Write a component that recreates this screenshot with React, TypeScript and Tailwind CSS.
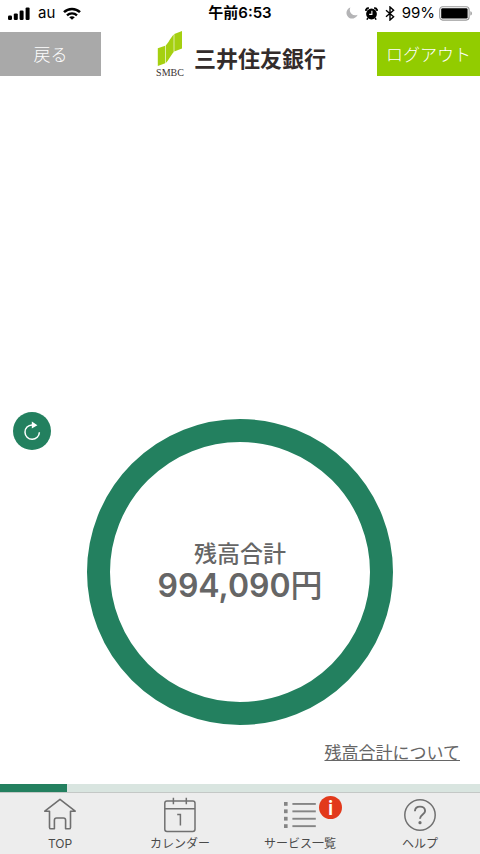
import type { ReactNode } from "react"

const LATIN_JP = "font-['Inter','Noto_Sans_CJK_JP',sans-serif]"

function SignalIcon() {
  return (
    <svg viewBox="0 0 22 13" className="h-[13px] w-[22px]" fill="#000" aria-hidden="true">
      <rect x="0" y="8.6" width="4" height="4.4" rx="1.2" />
      <rect x="5.8" y="6.4" width="4" height="6.6" rx="1.2" />
      <rect x="11.6" y="3.6" width="4" height="9.4" rx="1.2" />
      <rect x="17.6" y="0.4" width="4" height="12.6" rx="1.2" />
    </svg>
  )
}

function WifiIcon() {
  return (
    <svg viewBox="0 0 18 13" className="h-[13px] w-[18px]" aria-hidden="true">
      <path d="M1 5.2C5.4.9 12.6.9 17 5.2" fill="none" stroke="#000" strokeWidth="2.5" />
      <path d="M4 8.4C6.8 5.7 11.2 5.7 14 8.4" fill="none" stroke="#000" strokeWidth="2.3" />
      <path d="M9 12.8 6.2 10.2C7.7 8.8 10.3 8.8 11.8 10.2Z" fill="#000" />
    </svg>
  )
}

function MoonIcon() {
  return (
    <svg viewBox="0 0 12 12" className="size-3" fill="#b4b4b6" aria-hidden="true">
      <path d="M4.4.5A5.7 5.7 0 1 0 11.6 7.7 5.4 5.4 0 0 1 4.4.5Z" />
    </svg>
  )
}

function AlarmIcon() {
  return (
    <svg viewBox="0 0 13 13" className="size-[13px]" aria-hidden="true">
      <circle cx="6.5" cy="7" r="5.4" fill="#000" />
      <path d="M.7 3.8A3.4 3.4 0 0 1 3.8 1M12.3 3.8A3.4 3.4 0 0 0 9.2 1" fill="none" stroke="#000" strokeWidth="1.8" />
      <path d="m3 11-1.2 1.6M10 11l1.2 1.6" stroke="#000" strokeWidth="1.5" />
      <path d="M6.9 3.8v3.6H4.2" fill="none" stroke="#fff" strokeWidth="1.1" />
    </svg>
  )
}

function BluetoothIcon() {
  return (
    <svg viewBox="0 0 10 15" className="h-[15px] w-2.5" fill="none" stroke="#000" strokeWidth="1.4" aria-hidden="true">
      <path d="m1 4.2 7.6 6.6L5 14V1l3.6 3.2L1 10.8" />
    </svg>
  )
}

function BatteryIcon() {
  return (
    <svg viewBox="0 0 34 15" className="h-[15px] w-[34px]" aria-hidden="true">
      <rect x=".7" y=".7" width="29.4" height="13.4" rx="3" fill="#fff" stroke="#9a9a9a" strokeWidth="1.1" />
      <rect x="2.2" y="2.2" width="26.4" height="10.4" rx="1.4" fill="#000" />
      <path d="M31.4 5.2c2 .6 2 3.8 0 4.4Z" fill="#9a9a9a" />
    </svg>
  )
}

function SmbcMark() {
  return (
    <svg viewBox="0 0 26 37" className="h-[37px] w-[26px]" fill="#a5d010" aria-hidden="true">
      <path d="M.8 18.3 8.2 15.7V33.3L.8 36Z" />
      <path d="M8.8 15.3C11 13.5 13.8 7.2 16.7 4.4V22.1C14 25 11.4 31 8.8 32.9Z" />
      <path d="M17.3 3.9 25 1V18.6L17.3 21.5Z" />
    </svg>
  )
}

function RefreshIcon() {
  return (
    <svg viewBox="0 0 20 20" className="size-5" aria-hidden="true">
      <path d="M11.6 3.9H10A7.2 7.2 0 1 0 17.4 11.3" fill="none" stroke="#fff" strokeWidth="1.5" />
      <path d="M9.8.6 15.4 4.2 9.8 7.4Z" fill="#fff" />
    </svg>
  )
}

function HomeIcon() {
  return (
    <svg viewBox="0 0 34 34" className="size-[34px]" fill="none" stroke="#6f6f6f" strokeWidth="1.6" strokeLinejoin="round" aria-hidden="true">
      <path d="M17 1.4 1.8 13.2H6.5V29.4Q6.5 30.8 7.9 30.8H11.4V22.2Q11.4 20 13.6 20H20.4Q22.6 20 22.6 22.2V30.8H26.1Q27.5 30.8 27.5 29.4V13.2H32.2Z" />
    </svg>
  )
}

function CalendarIcon() {
  return (
    <svg viewBox="0 0 34 36" className="h-9 w-[34px]" fill="none" stroke="#707070" strokeWidth="1.5" aria-hidden="true">
      <rect x="1.8" y="4" width="30.2" height="30.4" rx="2.2" />
      <path d="M1.8 11.8H32M10.4.8V7.2M23.3.8V7.2" />
      <path d="M14.2 17.4H17.4V28.4" />
    </svg>
  )
}

function ListIcon() {
  return (
    <svg viewBox="0 0 32 28" className="h-7 w-8" fill="#858585" aria-hidden="true">
      {[1, 8.4, 15.8, 23.2].map((y) => (
        <g key={y}>
          <rect x="0" y={y} width="3.6" height="3.8" />
          <rect x="8.4" y={y + 1} width="23.4" height="1.9" />
        </g>
      ))}
    </svg>
  )
}

function HelpIcon() {
  return (
    <svg viewBox="0 0 34 34" className="size-[34px]" fill="none" stroke="#707070" aria-hidden="true">
      <circle cx="17" cy="17" r="15.2" strokeWidth="1.5" />
      <path d="M11.9 13.2C12.1 10.1 14.2 8.6 17 8.6 20 8.6 22.1 10.4 22.1 13 22.1 16.5 17 16.8 17 20.8" strokeWidth="1.9" />
      <circle cx="17" cy="24.7" r="1.6" fill="#707070" stroke="none" />
    </svg>
  )
}

function NavItem({ label, badge, children }: { label: string; badge?: string; children: ReactNode }) {
  return (
    <li className="flex-1">
      <a href="#" className="flex flex-col items-center text-[12px] leading-4 text-[#4a4a4a]">
        <span className="relative flex h-9 items-center">
          {children}
          {badge && (
            <span className="absolute -top-px left-[35px] flex size-[23px] items-center justify-center rounded-full bg-[#e2391b] text-[20px] font-semibold leading-6 text-white">
              {badge}
            </span>
          )}
        </span>
        <span className="mt-[3px]">{label}</span>
      </a>
    </li>
  )
}

function StatusBar() {
  return (
    <div className="grid h-8 grid-cols-[1fr_auto_1fr] items-start pt-1 text-[15px] leading-[18px] text-black">
      <div className="flex h-[18px] items-center gap-2 pl-2">
        <SignalIcon />
        <span>au</span>
        <WifiIcon />
      </div>
      <span className="font-semibold">午前6:53</span>
      <div className="flex h-[18px] items-center justify-end gap-[7px] pr-[7px]">
        <MoonIcon />
        <AlarmIcon />
        <BluetoothIcon />
        <span className="flex items-center gap-1">
          99%
          <BatteryIcon />
        </span>
      </div>
    </div>
  )
}

export default function App() {
  return (
    <div className={`${LATIN_JP} flex min-h-screen flex-col bg-white`}>
      <StatusBar />

      <header className="flex h-11 items-start justify-between">
        <button type="button" className="h-11 w-[101px] bg-[#a9a9a9] pt-[3px] text-[17px] font-light text-white">
          戻る
        </button>
        <div className="-mt-0.5 flex items-center pl-0.5">
          <div className="flex w-8 flex-col items-center">
            <SmbcMark />
            <span className="font-['Liberation_Serif',serif] text-[10px] leading-3 text-[#3a3232]">SMBC</span>
          </div>
          <h1 className="ml-2 pt-2 text-[22px] font-bold leading-8 text-[#332c2b]">三井住友銀行</h1>
        </div>
        <button type="button" className="h-11 w-[103px] bg-[#92cc00] pt-[3px] text-[17px] font-light text-white">
          ログアウト
        </button>
      </header>

      <main className="flex flex-1 flex-col justify-end">
        <section className="grid grid-cols-[1fr_auto_1fr] items-start">
          <button
            type="button"
            aria-label="更新"
            className="ml-[13px] flex size-[38px] items-center justify-center rounded-full bg-[#23805f]"
          >
            <RefreshIcon />
          </button>
          <div className="mt-[7px] flex size-[306px] flex-col items-center justify-center rounded-full border-[23px] border-[#23805f] text-[#666]">
            <p className="text-[23px] font-medium leading-7">残高合計</p>
            <p className="text-[32px] font-semibold leading-9">
              994,090<span className="font-medium">円</span>
            </p>
          </div>
        </section>
        <a href="#" className="mt-3.5 mb-[17px] mr-5 self-end text-[17px] leading-7 text-[#666] underline underline-offset-1">
          残高合計について
        </a>
      </main>

      <footer>
        <div className="h-2 bg-[#d9e5e0]">
          <div className="h-full w-[14%] bg-[#23805f]" />
        </div>
        <nav className="border-t border-[#c4c8c6] bg-[#ededed] pt-1 pb-0.5">
          <ul className="flex">
            <NavItem label="TOP">
              <HomeIcon />
            </NavItem>
            <NavItem label="カレンダー">
              <CalendarIcon />
            </NavItem>
            <NavItem label="サービス一覧" badge="i">
              <ListIcon />
            </NavItem>
            <NavItem label="ヘルプ">
              <HelpIcon />
            </NavItem>
          </ul>
        </nav>
      </footer>
    </div>
  )
}
